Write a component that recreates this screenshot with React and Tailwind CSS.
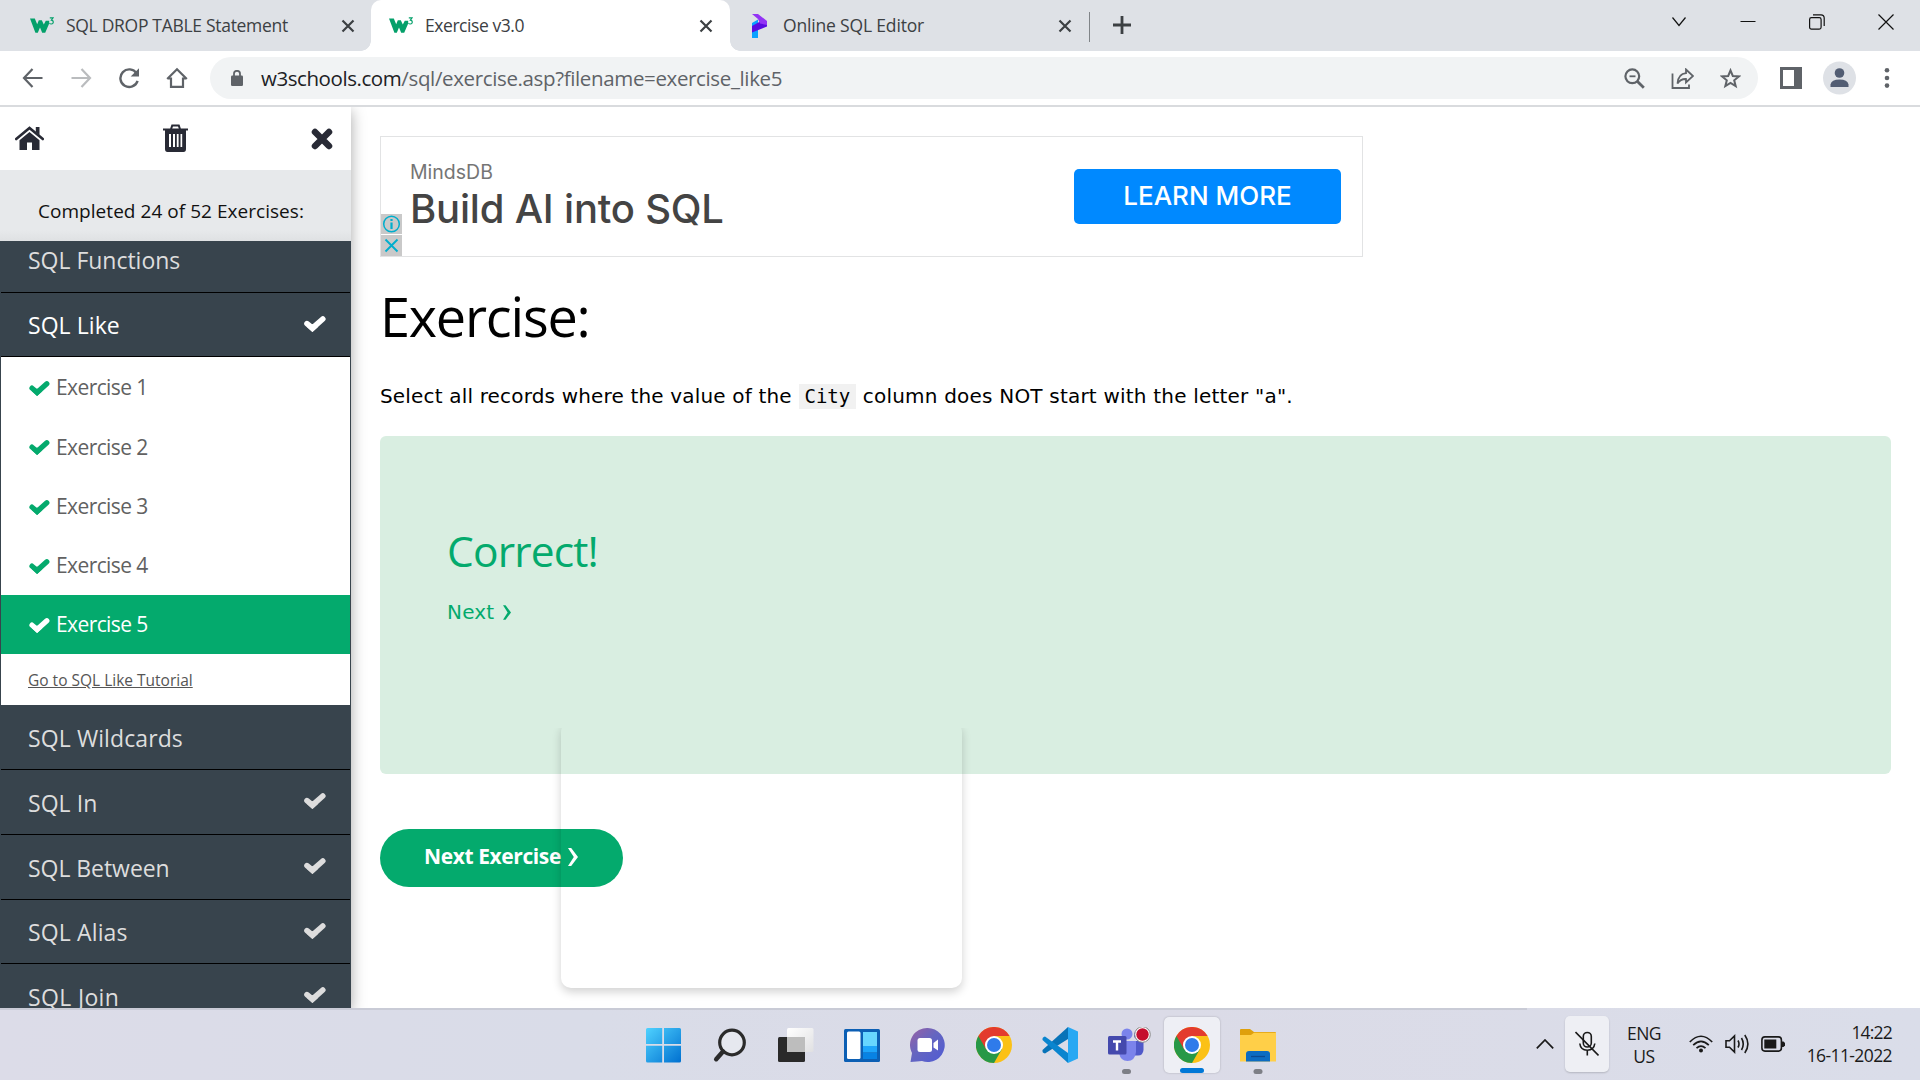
import React from "react";

const T = ({ className = "", children }) => (
  <span className={"block w-fit whitespace-nowrap " + className}>{children}</span>
);

const W3Logo = ({ className = "" }) => (
  <svg viewBox="0 0 24 17" className={"h-[17px] w-6 shrink-0 " + className}>
    <path d="M0 1.500H4.800L7.200 7.200L8.800 3.200H11.800L13.800 7.600L15.800 3.800H19.200V6.500L15.200 15.800H12.200L10 10.600L7.800 15.800H5.400Z" fill="#04a06a" />
    <path d="M19.800 .9H23L21.400 3.200Q23.400 3.400 23.300 5.200Q23.100 7 21.300 7Q20 7 19.500 6.200" fill="none" stroke="#04a06a" strokeWidth="1.200" />
  </svg>
);

const TabClose = ({ className = "" }) => (
  <svg viewBox="0 0 14 14" className={"h-3.5 w-3.5 shrink-0 " + className}>
    <path d="M1.500 1.500L12.500 12.500M12.500 1.500L1.500 12.500" stroke="#3c4043" strokeWidth="2.200" />
  </svg>
);

const Check = ({ className = "" }) => (
  <svg viewBox="0 0 22 16" className={"shrink-0 " + className}>
    <path d="M3 7.600L8.400 12.200L18.800 3" fill="none" stroke="currentColor" strokeWidth="5.600" strokeLinecap="round" />
    <path d="M8.400 16L3 11L8.400 8L14 11Z" fill="currentColor" />
  </svg>
);

function TabStrip() {
  return (
    <div className="flex h-[51px] shrink-0 bg-[#dee1e6] text-[17.5px] leading-[51px] text-[#3c4043]">
      <div className="flex w-[371px] items-center bg-[#dee1e6] pl-[30px]">
        <W3Logo />
        <T className="ml-3 tracking-[-0.3px]">SQL DROP TABLE Statement</T>
        <TabClose className="ml-auto mr-4" />
      </div>
      <div className="relative flex w-[359px] items-center rounded-t-[10px] bg-white pl-[18px]">
        <span className="absolute bottom-0 -left-[10px] h-[10px] w-[10px] bg-[radial-gradient(circle_at_0_0,#dee1e6_9.5px,#fff_10px)]" />
        <span className="absolute bottom-0 -right-[10px] h-[10px] w-[10px] bg-[radial-gradient(circle_at_100%_0,#dee1e6_9.5px,#fff_10px)]" />
        <W3Logo />
        <T className="ml-3 tracking-[-0.44px]">Exercise v3.0</T>
        <TabClose className="ml-auto mr-[17px]" />
      </div>
      <div className="flex w-[359px] items-center pl-[21px]">
        <svg viewBox="0 0 16 24" className="h-6 w-4 shrink-0">
          <path d="M1 9L7 5.500V24H1Z" fill="#0aa2ff" />
          <path d="M1 12L11 6.500L16 8V12.500L1 18.500Z" fill="#5a0be0" />
          <path d="M1 0H7L16 7V11L9 9.500L7 5Z" fill="#9333f5" />
        </svg>
        <T className="ml-4 tracking-[-0.17px]">Online SQL Editor</T>
        <TabClose className="ml-auto mr-[17px]" />
      </div>
      <div className="mt-3 h-[30px] w-px bg-[#808488]" />
      <svg viewBox="0 0 18 18" className="mt-4 ml-[23px] h-[18px] w-[18px]">
        <path d="M9 0V18M0 9H18" stroke="#3c4043" strokeWidth="2.800" />
      </svg>
      <div className="mt-3.5 mr-[26px] ml-auto flex h-4 items-center gap-[53px] text-[#111]">
        <svg viewBox="0 0 16 16" className="h-4 w-4"><path d="M1.500 3.500L8 11.500L14.500 3.500" fill="none" stroke="currentColor" strokeWidth="1.200" /></svg>
        <svg viewBox="0 0 16 16" className="h-4 w-4"><path d="M.5 7.500H15.500" stroke="currentColor" strokeWidth="1" /></svg>
        <svg viewBox="0 0 16 16" className="h-4 w-4" fill="none" stroke="currentColor" strokeWidth="1.200"><rect x=".6" y="3.600" width="11.500" height="11.500" rx="1.800" /><path d="M4 .8H12Q15.200 .8 15.200 4V12" /></svg>
        <svg viewBox="0 0 16 16" className="h-4 w-4"><path d="M.5 .5L15.500 15.500M15.500 .5L.5 15.500" stroke="currentColor" strokeWidth="1.200" /></svg>
      </div>
    </div>
  );
}

function Toolbar() {
  return (
    <div className="flex h-14 shrink-0 items-center border-b-2 border-[#d9dbde] bg-white pl-[22px] text-[#5f6368]">
      <svg viewBox="0 0 22 20" className="h-5 w-[22px]" fill="none" stroke="currentColor" strokeWidth="2.200"><path d="M20.500 10H2.500M10.500 1L2 10L10.500 19" /></svg>
      <svg viewBox="0 0 22 20" className="ml-[27px] h-5 w-[22px] text-[#babcbe]" fill="none" stroke="currentColor" strokeWidth="2.200"><path d="M.5 10H18.500M10.500 1L19 10L10.500 19" /></svg>
      <svg viewBox="0 0 22 22" className="ml-[25px] h-[22px] w-[22px]"><path d="M18.600 6.400A8.800 8.800 0 1 0 19.600 13.800" fill="none" stroke="currentColor" strokeWidth="2.400" /><path d="M21 1.200V9.500H12.700Z" fill="currentColor" /></svg>
      <svg viewBox="0 0 22 22" className="ml-[26px] h-[22px] w-[22px]" fill="none" stroke="currentColor" strokeWidth="2.200"><path d="M5 10.500V19.800H17V10.500M1.200 12L11 2.200L20.800 12M1.500 11.500H5M17 11.500H20.500" /></svg>
      <div className="ml-[22px] flex h-[42px] w-[1548px] items-center rounded-full bg-[#f1f3f4] pr-[17px] pl-[21px]">
        <svg viewBox="0 0 12 16" className="h-4 w-3"><rect y="5.500" width="12" height="10.500" rx="1.300" fill="currentColor" /><path d="M3 6V3.800A3 3 0 0 1 9 3.800V6" fill="none" stroke="currentColor" strokeWidth="1.800" /></svg>
        <div className="ml-[18px] flex text-[20.5px] leading-[42px] text-[#5f6368]">
          <T className="tracking-[-0.43px] text-[#202124]">w3schools.com</T>
          <T className="tracking-[-0.36px]">/sql/exercise.asp?filename=exercise_like5</T>
        </div>
        <div className="ml-auto flex items-center gap-[26px]">
          <svg viewBox="0 0 21 21" className="h-[21px] w-[21px]" fill="none" stroke="currentColor" strokeWidth="2.200"><circle cx="8.300" cy="8.300" r="6.900" /><path d="M5.500 8.300H11.500" strokeWidth="1.800" /><path d="M13 13L19.800 19.800" strokeWidth="2.800" /></svg>
          <svg viewBox="0 0 23 21" className="h-[21px] w-[23px]" fill="none" stroke="currentColor" strokeWidth="1.800"><path d="M1.500 5.500V20H18V16.500" /><path d="M15 1.500L22 8L15 14.500V11Q9.500 10.800 6.500 15.500Q7.300 5.800 15 5.200Z" /></svg>
          <svg viewBox="0 0 21 21" className="h-[21px] w-[21px]" fill="none" stroke="currentColor" strokeWidth="2"><path d="M10.500 2.400L12.800 8L18.900 8.400L14.200 12.300L15.700 18.200L10.500 15L5.300 18.200L6.800 12.300L2.100 8.400L8.200 8Z" /></svg>
        </div>
      </div>
      <svg viewBox="0 0 22 22" className="ml-[22px] h-[22px] w-[22px]"><path fillRule="evenodd" d="M0 0H22V22H0ZM3 3V19H14V3Z" fill="currentColor" /></svg>
      <svg viewBox="0 0 34 34" className="ml-[21px] h-[34px] w-[34px]"><circle cx="16.500" cy="17" r="16.500" fill="#dee1e6" /><circle cx="16.500" cy="12" r="4.800" fill="#525d73" /><path d="M7.500 26V23.500Q8.500 18.500 16.500 18.500Q24.500 18.500 25.500 23.500V26Z" fill="#525d73" /></svg>
      <svg viewBox="0 0 6 20" className="ml-[27px] h-5 w-1.5" fill="currentColor"><circle cx="3" cy="2.300" r="2.300" /><circle cx="3" cy="10" r="2.300" /><circle cx="3" cy="17.600" r="2.300" /></svg>
    </div>
  );
}

const Section = ({ className = "h-[65px]", text = "", done, children }) => (
  <div className={"mx-px flex shrink-0 items-center border-b border-black pr-[24px] pl-[27px] text-[23px] " + className}>
    <T className={"pt-0.5 " + text}>{children}</T>
    {done && <Check className="ml-auto h-4 w-[22px] -translate-y-px" />}
  </div>
);

const Exercise = ({ n, active }) => (
  <div className={"flex h-[59.25px] items-center pl-7 text-[21px] " + (active ? "bg-[#04aa6d] text-white" : "text-[#616161]")}>
    <Check className={"mt-0.5 h-[15px] w-[21px] " + (active ? "" : "text-[#04aa6d]")} />
    <T className="ml-[6px] pt-px tracking-[-0.6px]">Exercise {n}</T>
  </div>
);

function Sidebar() {
  return (
    <aside className="relative flex w-[351px] shrink-0 flex-col shadow-[0_4px_14px_rgba(0,0,0,0.35)]">
      <div className="flex h-[63px] items-center bg-white pr-[18px] pl-[15px] text-[#282a35]">
        <svg viewBox="0 0 29 24" className="mb-0.5 h-6 w-[29px]"><path d="M14.500 6L24.500 14.300V24H17V16.500H12V24H4.500V14.300Z" fill="currentColor" /><path d="M1.200 13L14.500 1.900L27.800 13" fill="none" stroke="currentColor" strokeWidth="2.600" strokeLinecap="round" /><path d="M20.800 1H24.500V9L20.800 6Z" fill="currentColor" /></svg>
        <svg viewBox="0 0 25 28" className="mb-0.5 ml-[119px] h-7 w-[25px]"><path d="M0 4.500H25V6.500H0ZM7 5L8.500 .5H16.500L18 5H16L15 2.500H10L9 5Z" fill="currentColor" /><path fillRule="evenodd" d="M2 6H23V25Q23 28 20.500 28H4.500Q2 28 2 25ZM6 10V23H8V10ZM10 10V23H12V10ZM13.800 10V23H15.600V10ZM17.500 10V23H19.200V10Z" fill="currentColor" /></svg>
        <svg viewBox="0 0 22 22" className="ml-auto h-[22px] w-[22px]"><path d="M4 4L18 18M18 4L4 18" stroke="currentColor" strokeWidth="6.500" strokeLinecap="round" /></svg>
      </div>
      <div className="flex h-[71px] items-center bg-[linear-gradient(#e7e9eb_85%,#dfe1e3)] pt-3 pl-[38px] text-[19px] text-[#111]"><T className="tracking-[0.04px]">Completed 24 of 52 Exercises:</T></div>
      <div className="flex h-[767px] flex-col overflow-hidden bg-[#38444d] text-[#ddd]">
        <Section text="tracking-[-0.02px]" className="h-[52px] pb-3.5">SQL Functions</Section>
        <Section text="tracking-[0.06px]" className="h-16 text-white" done>SQL Like</Section>
        <div className="mx-px h-[348px] shrink-0 bg-white pt-px">
          <Exercise n={1} /><Exercise n={2} /><Exercise n={3} /><Exercise n={4} /><Exercise n={5} active />
          <div className="flex h-[51px] items-center pt-0.5 pl-[27px] text-[15.5px] text-[#555] underline"><T>Go to SQL Like Tutorial</T></div>
        </div>
        <Section text="tracking-[0.1px]">SQL Wildcards</Section>
        <Section text="tracking-[0.05px]" done>SQL In</Section>
        <Section text="tracking-[-0.05px]" done>SQL Between</Section>
        <Section text="tracking-[0.14px]" className="h-16" done>SQL Alias</Section>
        <Section text="tracking-[0.35px]" done>SQL Join</Section>
      </div>
    </aside>
  );
}

function AdBanner() {
  return (
    <div className="relative flex h-[121px] w-[983px] justify-between border border-[#e2e3e4] pl-[29px] pr-[21px]">
      <div className="pt-[22px]">
        <T className="font-[Inter,sans-serif] text-[19.5px] leading-[26px] text-[#757575]">MindsDB</T>
        <T className="font-[Inter,sans-serif] text-[40px] font-medium leading-[48px] tracking-[-0.2px] text-[#444]">Build AI into SQL</T>
      </div>
      <div className="mt-8 flex h-[55px] w-[267px] items-center justify-center rounded-[5px] bg-[#0089ff] pb-0.5 font-[Inter,sans-serif] text-[26px] font-medium text-white"><T>LEARN MORE</T></div>
      <div className="absolute bottom-0 left-0 flex w-[21px] flex-col gap-px text-[#00aecd]">
        <svg viewBox="0 0 21 20" className="h-5 bg-[#c9c9c9]" fill="none" stroke="currentColor"><circle cx="10.500" cy="10" r="7.800" strokeWidth="1.500" /><path d="M10.500 8.500V15M10.500 5V7" strokeWidth="2.200" /></svg>
        <svg viewBox="0 0 21 21" className="h-[21px] bg-[#c9c9c9]"><path d="M4.500 4.500L16.500 16.500M16.500 4.500L4.500 16.500" stroke="currentColor" strokeWidth="1.900" /></svg>
      </div>
    </div>
  );
}

const Chevron = ({ className = "" }) => (
  <svg viewBox="0 0 10 18" className={className}><path d="M0 0H3.200L10 9L3.200 18H0L5.800 9Z" fill="currentColor" /></svg>
);

function Main() {
  return (
    <main className="flex grow flex-col pt-[29px] pr-[29px] pl-[29px]">
      <AdBanner />
      <T className="mt-[19px] text-[54px] leading-[80px] tracking-[-1.2px] text-black">Exercise:</T>
      <div className="mt-[25px] flex h-[30px] items-center font-['DejaVu_Sans'] text-[20px] text-black">
        <T className="tracking-[0.17px]">Select all records where the value of the</T>
        <span className="ml-[7px] flex h-[25px] w-[57px] items-center justify-center bg-[#f1f1f1] font-['DejaVu_Sans_Mono'] text-[19px]"><T>City</T></span>
        <T className="ml-[7px] tracking-[0.2px]">column does NOT start with the letter "a".</T>
      </div>
      <section className="mt-[25px] h-[338px] rounded-[6px] bg-[#d9eee1] pt-[87px] pl-[67px] text-[#04aa6d]">
        <T className="text-[42.5px] leading-[56px] tracking-[-0.85px]">Correct!</T>
        <div className="mt-[18px] flex h-[30px] items-center font-['DejaVu_Sans'] text-[20px]"><T className="tracking-[0.2px]">Next</T><Chevron className="ml-[9px] h-[15px] w-2" /></div>
      </section>
      <div className="mt-[55px] flex h-[58px] w-[243px] items-center rounded-full bg-[#04aa6d] pb-0.5 pl-[44px] text-[21px] font-bold text-white"><T className="tracking-[-0.4px]">Next Exercise</T><Chevron className="ml-[7px] h-[18px] w-[10px]" /></div>
    </main>
  );
}

const Chrome = () => (
  <svg viewBox="0 0 36 36" className="h-9 w-9">
    <circle cx="18" cy="18" r="18" fill="#fbc116" />
    <path d="M18 18L2.400 9A18 18 0 0 0 18 36L26 22Z" fill="#279847" />
    <path d="M18 9H33.600A18 18 0 0 0 2.400 9L10.200 22.500Z" fill="#e33b2e" />
    <circle cx="18" cy="18" r="9" fill="#fff" /><circle cx="18" cy="18" r="7" fill="#2f7bea" />
  </svg>
);

function Taskbar() {
  return (
    <footer className="flex h-[72px] shrink-0 bg-[linear-gradient(90deg,#dcdce8,#d9dce8_30%,#dbdbe7_60%,#dadde9)] text-[#1a1a1a]">
      <div className="flex w-[1527px] shrink-0 gap-[30px] border-t-2 border-[#c9cbd6] pt-[17px] pl-[646px]">
        <svg viewBox="0 0 36 36" className="h-9 w-9"><defs><linearGradient id="win" x1="0" y1="0" x2="1" y2="1"><stop stopColor="#4fd2ff" /><stop offset="1" stopColor="#0070d0" /></linearGradient></defs><path d="M1.500 1H16.200V17H0V2.500Q0 1 1.500 1ZM18 1H33.500Q35 1 35 2.500V17H18ZM0 18.700H16.200V35.500H1.500Q0 35.500 0 34ZM18 18.700H35V34Q35 35.500 33.500 35.500H18Z" fill="url(#win)" /></svg>
        <svg viewBox="0 0 36 36" className="h-9 w-9" fill="none" stroke="#2b2b2b"><circle cx="20" cy="15.500" r="12.300" fill="#e6e8ef" strokeWidth="3.200" /><path d="M11 24.500L4.200 32.200" strokeWidth="4.500" strokeLinecap="round" /></svg>
        <svg viewBox="0 0 36 36" className="h-9 w-9"><defs><linearGradient id="pane" x1="0" y1="0" x2="1" y2="1"><stop stopColor="#fff" /><stop offset="1" stopColor="#e0e0e2" /></linearGradient></defs><rect x="0" y="10" width="27" height="25" rx="1.500" fill="#2a2a2a" /><rect x="9" y="1" width="26.500" height="24" rx="1.500" fill="url(#pane)" /><path d="M9 10H27V25H9Z" fill="#bdbdbd" /></svg>
        <svg viewBox="0 0 36 36" className="h-9 w-9"><rect x="0" y="2" width="36" height="33" rx="1.500" fill="#0c5fb4" /><rect x="3" y="4.500" width="13.500" height="27.500" rx="1.500" fill="#fff" /><path d="M19 5H33V19H19Z" fill="#67d6ff" /><path d="M19 19H33V25.500H19Z" fill="#1ea5fb" /><path d="M19 26H33V32H19Z" fill="#0782e4" /></svg>
        <svg viewBox="0 0 36 36" className="h-9 w-9"><defs><linearGradient id="chat" x1="0" y1="0" x2="1" y2="1"><stop stopColor="#9a60a4" /><stop offset=".45" stopColor="#6566c0" /><stop offset="1" stopColor="#4f5bd5" /></linearGradient></defs><path d="M17.500 1A17 17 0 1 1 12 34Q7 34.500 .5 35L2 26A17 17 0 0 1 17.500 1Z" fill="url(#chat)" /><rect x="7.500" y="11" width="14.500" height="14" rx="2.500" fill="#fff" /><path d="M23.500 16L28 12.500V23.500L23.500 20.500Z" fill="#fff" /></svg>
        <Chrome />
        <svg viewBox="0 0 36 36" className="h-9 w-9"><path d="M3 26.500L26 12V0L.5 23Q0 26 3 26.500Z" fill="#0873b8" /><path d="M3 9.500L26 26V36L.5 13Q0 10 3 9.500Z" fill="#0a85cf" /><path d="M26 0L36 4.500V31.500L26 36Z" fill="#27a8f3" /></svg>
        <svg viewBox="0 0 44 48" className="-mr-2 h-12 w-11"><circle cx="19" cy="7" r="5.500" fill="#7b83eb" /><path d="M27 14H35.500V23Q35 28.500 30 28.500H26Z" fill="#5059c9" /><circle cx="30" cy="8" r="4" fill="#5059c9" /><path d="M11 14H28V25Q27 34 19.500 34Q12.500 34 11 26Z" fill="#7b83eb" /><rect x="0" y="9" width="18.500" height="18.500" rx="1.500" fill="#4449ad" /><path d="M5 14.500H13M9 14.500V23.500" stroke="#fff" strokeWidth="2.400" /><circle cx="34.500" cy="7.500" r="7.800" fill="#fff" stroke="#888" /><circle cx="34.500" cy="7.500" r="6.200" fill="#c50f2e" /><rect x="14" y="42" width="9" height="5" rx="2.500" fill="#7d7f86" /></svg>
        <div className="-mx-2.5 -mt-2.5 flex h-14 w-14 shrink-0 flex-col items-center rounded-[5px] bg-[#eeeff5] pt-2.5 shadow-[0_0_2px_rgba(0,0,0,0.25)]"><Chrome /><span className="mt-[5px] h-[5px] w-6 shrink-0 rounded-full bg-[#0078d7]" /></div>
        <svg viewBox="0 0 36 48" className="h-12 w-9"><path d="M0 3Q0 2 1 2H10L14 5H35Q36 5 36 6V12H0Z" fill="#dfa00c" /><path d="M0 8H11L14 5.800H36V34.500H0Z" fill="#ffcf48" /><path d="M6 34.500V27Q6 24 9 24H27Q30 24 30 27V34.500Z" fill="#0c6cc2" /><path d="M11 29.500H25" stroke="#0b4a91" strokeWidth="1.300" /><rect x="13.500" y="42" width="9" height="5" rx="2.500" fill="#7d7f86" /></svg>
      </div>
      <div className="flex grow items-center pl-[9px]">
        <svg viewBox="0 0 18 10" className="h-2.5 w-[18px]"><path d="M.8 9.300L9 1L17.200 9.300" fill="none" stroke="currentColor" strokeWidth="1.700" /></svg>
        <div className="ml-[11px] flex h-14 w-11 items-center justify-center rounded-[5px] bg-[#eeeff4] shadow-[0_1px_2px_rgba(0,0,0,0.18)]">
          <svg viewBox="0 0 24 26" className="h-[26px] w-6" fill="none" stroke="currentColor" strokeWidth="1.600"><rect x="8.300" y="1.500" width="8" height="14.500" rx="4" /><path d="M4.800 12.500Q5.500 19 12.300 19.300Q19 19 19.800 12.500M12.300 19.300V24.500M.5 1L23.500 24.500" /></svg>
        </div>
        <div className="ml-4 flex w-[38px] flex-col items-center pt-0.5 text-[17.5px] leading-[23px]"><T className="tracking-[-0.5px]">ENG</T><T className="tracking-[-0.5px]">US</T></div>
        <svg viewBox="0 0 24 18" className="ml-[26px] h-[18px] w-6" fill="none" stroke="currentColor" strokeWidth="1.700"><path d="M.8 7Q12-4.500 23.200 7M4.200 10.200Q12 2.500 19.800 10.200M7.500 13.200Q12 9 16.500 13.200" /><circle cx="12" cy="15.500" r="2" fill="currentColor" stroke="none" /></svg>
        <svg viewBox="0 0 24 20" className="ml-3 h-5 w-6" fill="none" stroke="currentColor" strokeWidth="1.600"><path d="M1 6.800H4.500L9.500 2V18L4.500 13.200H1ZM13 6.500Q15 10 13 13.500M16.500 4Q20 10 16.500 16M19.800 1Q26 10 19.800 19" /></svg>
        <svg viewBox="0 0 24 16" className="ml-3 h-4 w-6"><rect x=".9" y=".9" width="19.500" height="14.200" rx="3" fill="none" stroke="currentColor" strokeWidth="1.600" /><rect x="3.300" y="3.500" width="12" height="9" fill="currentColor" /><path d="M21 5.500H22.500L24 7V9.500L22.500 11H21Z" fill="currentColor" /></svg>
        <div className="ml-auto mr-[28px] flex flex-col items-end text-[17.5px] leading-[23px]"><T className="tracking-[-0.8px]">14:22</T><T className="tracking-[-0.6px]">16-11-2022</T></div>
      </div>
    </footer>
  );
}

export default function App() {
  return (
    <div className="flex h-[1080px] w-[1920px] flex-col overflow-hidden bg-white font-['Open_Sans',sans-serif]">
      <TabStrip />
      <Toolbar />
      <div className="relative flex h-[901px] shrink-0 overflow-hidden bg-white">
        <Sidebar />
        <Main />
        <div className="absolute top-[615px] left-[561px] h-[266px] w-[401px] rounded-[10px] shadow-[0_4px_10px_rgba(0,0,0,0.18)] [clip-path:inset(6px_-20px_-20px_-20px)]" />
      </div>
      <Taskbar />
    </div>
  );
}
